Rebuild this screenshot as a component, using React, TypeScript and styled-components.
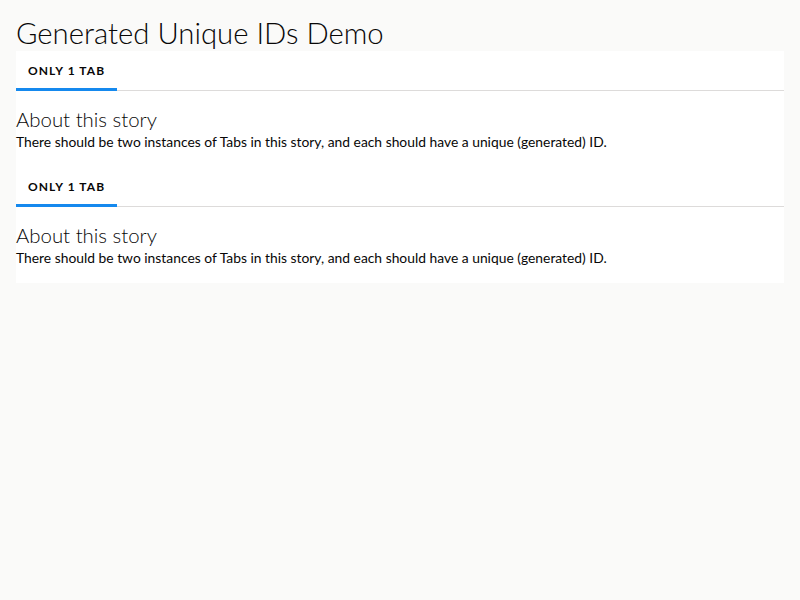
import { createGlobalStyle, styled } from 'styled-components';

const GlobalStyle = createGlobalStyle`
  html, body {
    margin: 0;
    background: #fafaf9;
  }
  body {
    font-family: Lato, "Open Sans", sans-serif;
    color: #080707;
  }
`;

const Page = styled.div`
  padding: 0 16px;
`;

const Title = styled.h1`
  margin: 0;
  padding-top: 14px;
  font-size: 29.3px;
  font-weight: 300;
  line-height: 37px;
`;

const Panel = styled.div`
  background: #ffffff;
`;

const TabNav = styled.ul`
  display: flex;
  margin: 0;
  padding: 0;
  list-style: none;
  border-bottom: 1px solid #dddbda;
`;

const TabItem = styled.li<{ $active?: boolean }>`
  position: relative;
  display: flex;
  align-items: center;
  height: 39px;
  padding: 0 12px;
  font-size: 12px;
  font-weight: 700;
  letter-spacing: 0.09em;
  text-transform: uppercase;
  color: #080707;

  &::after {
    content: '';
    position: absolute;
    left: 0;
    right: 0;
    bottom: -1px;
    height: 3px;
    background: ${(p) => (p.$active ? '#1589ee' : 'transparent')};
  }
`;

const TabContent = styled.div`
  padding: 16px 0;
`;

const Heading = styled.h2`
  margin: 0;
  font-size: 20.4px;
  font-weight: 300;
  line-height: 25px;
`;

const Body = styled.p`
  margin: 0;
  font-size: 13.85px;
  line-height: 19px;
`;

const StoryTabs = () => (
  <>
    <TabNav>
      <TabItem $active>Only 1 Tab</TabItem>
    </TabNav>
    <TabContent>
      <Heading>About this story</Heading>
      <Body>
        There should be two instances of Tabs in this story, and each should have a unique (generated) ID.
      </Body>
    </TabContent>
  </>
);

export default function App() {
  return (
    <>
      <GlobalStyle />
      <Page>
        <Title>Generated Unique IDs Demo</Title>
        <Panel>
          <StoryTabs />
          <StoryTabs />
        </Panel>
      </Page>
    </>
  );
}
